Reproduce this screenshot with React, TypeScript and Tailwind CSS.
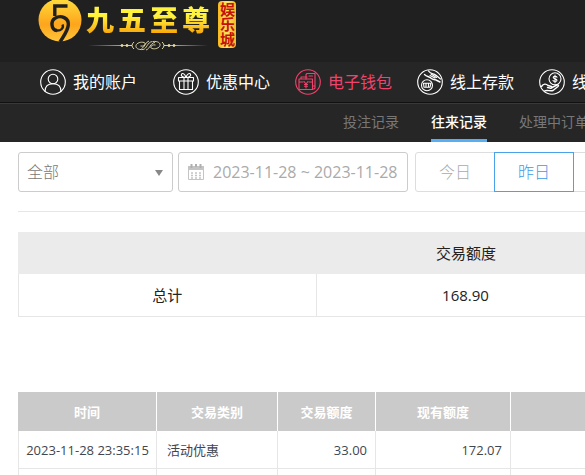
import type { ReactNode } from "react";

const NAV_ITEMS = [
  { label: "我的账户", icon: "user", active: false, spacing: "mr-9" },
  { label: "优惠中心", icon: "gift", active: false, spacing: "mr-[25px]" },
  { label: "电子钱包", icon: "wallet", active: true, spacing: "mr-[25px]" },
  { label: "线上存款", icon: "deposit", active: false, spacing: "mr-[25px]" },
  { label: "线上取款", icon: "withdraw", active: false, spacing: "mr-[25px]" },
] as const;

const TABS = ["投注记录", "往来记录", "处理中订单"];
const RANGES = ["今日", "昨日", "本周"];

type NavIcon = (typeof NAV_ITEMS)[number]["icon"];

export default function App() {
  return (
    <div className="h-screen overflow-hidden bg-white font-['Open_Sans','Noto_Sans_CJK_SC',sans-serif] whitespace-nowrap">
      <header className="bg-[#262626]">
        <Logo />
        <MainNav />
        <SubNav />
      </header>
      <main className="pl-[18px]">
        <Filters />
        <SummaryTable />
        <RecordsTable />
      </main>
    </div>
  );
}

function Logo() {
  return (
    <div className="h-[62px] bg-[#202020] pl-[38px]">
      <a href="#" className="inline-flex items-start">
        <Emblem />
        <span className="ml-1 flex flex-col items-center">
          <span className="flex gap-1 bg-linear-to-b from-[#fff23c] from-40% to-[#f7a400] to-85% bg-clip-text text-[28px] leading-[40px] font-black text-transparent">
            <span>九</span>
            <span>五</span>
            <span>至</span>
            <span>尊</span>
          </span>
          <Flourish />
        </span>
        <span className="mt-px ml-2 flex h-[47px] w-[18px] items-center justify-center rounded-sm bg-linear-to-r from-[#f7b81c] via-[#ffe65c] to-[#f7b81c] text-[15px] leading-[18px] font-bold text-[#c31208] [writing-mode:vertical-rl]">
          娱乐城
        </span>
      </a>
    </div>
  );
}

function Emblem() {
  return (
    <svg aria-hidden="true" viewBox="0 0 44 44" className="h-11 w-11 shrink-0">
      <defs>
        <linearGradient id="gold" x1="0" y1="0" x2="0" y2="1">
          <stop offset="0" stopColor="#ffdc3c" />
          <stop offset="0.6" stopColor="#fda51c" />
          <stop offset="1" stopColor="#ffc53a" />
        </linearGradient>
      </defs>
      <circle cx="22" cy="20" r="21.5" fill="url(#gold)" />
      <g fill="none" stroke="#202020">
        <path d="M29.500 6H16.800V16" strokeWidth="3.400" />
        <path
          d="M19 30.500C13 30 12.500 21 17 18.300C23 14.500 31 18 30.300 25C29.800 31 26 35.500 22 42"
          strokeWidth="3.400"
        />
        <path d="M18.500 30.500C23 31 26 28 24.500 24.500" strokeWidth="2.400" />
      </g>
    </svg>
  );
}

function Flourish() {
  return (
    <svg
      aria-hidden="true"
      viewBox="0 0 124 12"
      className="h-3 w-[124px] fill-none stroke-[#e8dca8]"
    >
      <defs>
        <linearGradient id="line-left" x1="0" x2="1">
          <stop offset="0" stopColor="#e8d48a" stopOpacity="0" />
          <stop offset="1" stopColor="#e8d48a" />
        </linearGradient>
        <linearGradient id="line-right" x1="0" x2="1">
          <stop offset="0" stopColor="#e8d48a" />
          <stop offset="1" stopColor="#e8d48a" stopOpacity="0" />
        </linearGradient>
      </defs>
      <rect x="2" y="5" width="44" height="1" fill="url(#line-left)" stroke="none" />
      <rect x="78" y="5" width="44" height="1" fill="url(#line-right)" stroke="none" />
      <path d="M48 2q-4 3.500 0 7M76 2q4 3.500 0 7" />
      <path
        d="M57 9.500C52 10 49.500 8 50 5.500S55 1.500 58 2.500 58 7 54.500 6M67 1.500C72 1 74.500 3 74 5.500S69 9.500 66 8.500 66 4 69.500 5M57 9.500C61 9 61 2 66.500 1.500M60 10C64 9 64 3 69 2.500M55.500 8.500C59 7.500 59 2 63 1"
        strokeWidth="0.900"
      />
      <circle cx="36" cy="5.500" r="1" fill="#e8d48a" />
      <circle cx="41" cy="5.500" r="1" fill="#e8d48a" />
      <circle cx="83" cy="5.500" r="1" fill="#e8d48a" />
      <circle cx="88" cy="5.500" r="1" fill="#e8d48a" />
    </svg>
  );
}

function MainNav() {
  return (
    <nav className="flex h-[41px] items-center border-b border-[#111111] pl-10">
      {NAV_ITEMS.map((item) => (
        <a
          key={item.label}
          href="#"
          className={`flex shrink-0 items-center gap-[7px] text-[16px] leading-6 ${item.spacing} ${
            item.active ? "text-[#f0436c]" : "text-white"
          }`}
        >
          <NavGlyph icon={item.icon} />
          {item.label}
        </a>
      ))}
    </nav>
  );
}

function NavGlyph({ icon }: { icon: NavIcon }) {
  const shapes: Record<NavIcon, ReactNode> = {
    user: (
      <>
        <circle cx="13" cy="10" r="4.800" />
        <path d="M5 22.500c0-4.800 3-7.700 8-7.700s8 2.900 8 7.700" />
      </>
    ),
    gift: (
      <>
        <path d="M5.500 8.500h15v3.500h-15zM6.500 12v8.500h13V12M11 8.500v12M15 8.500v12" />
        <path d="M13 8.500C10 8.500 7.500 7 8.500 5.200S12 5 13 8.500c1-3.500 3.500-5 4.500-3.300S16 8.500 13 8.500" />
      </>
    ),
    wallet: (
      <>
        <path d="M4 10h13.500v10.500H4zM4 13h4M14 13h3.500M6 10V8h6" />
        <path d="M11 10V5.500L12 4.500h8v14.500l-1 1h-1.500M14 7h3.500M17.500 17H20" />
        <path d="m9 12.500 2 2.500 2-2.500M11 15v4M9.500 15.500h3M9.500 17.200h3" />
      </>
    ),
    deposit: (
      <>
        <circle cx="10" cy="16.200" r="5.500" />
        <path d="M6.500 14.200h7.500l-1 4H7zM9 14.500v3.500M11.500 14.500v3.500" />
        <path
          d="M11.500 2c1.500 2.500 3.500 2.500 6 3.500s3.500 3 6 4.500"
          strokeWidth="1.400"
        />
        <path d="M7.500 5.500c2.500 2.500 5 2 7 4 1.500 1.500 3 .5 4.500 1.500l4 2" strokeWidth="1.400" />
        <path d="m13 6.500 5 2.500M14 5l5.500 3.500" />
      </>
    ),
    withdraw: (
      <>
        <circle cx="16" cy="9.800" r="6" />
        <path d="M18 8.200c-.7-1.400-3.800-1.200-3.800.4s3.800 1 3.800 2.700-3.200 1.600-4 .2M16 6v7.800" />
        <path
          d="M2.500 17.500C4.500 14.500 7 14.500 9 16.500l3.500 1c1 .8.300 1.700-.7 1.700L8.500 18.500"
          strokeWidth="1.400"
        />
        <path d="m13 18.500 5-2.500c1.500-.5 2 .5 1 1.500L14 21.500c-3 1-6-1-8.500.5" strokeWidth="1.400" />
      </>
    ),
  };

  return (
    <svg
      aria-hidden="true"
      viewBox="0 0 26 26"
      className="size-[26px] shrink-0 fill-none stroke-current"
      strokeWidth="1.100"
      strokeLinecap="round"
      strokeLinejoin="round"
    >
      <circle cx="13" cy="13" r="12.300" />
      {shapes[icon]}
    </svg>
  );
}

function SubNav() {
  return (
    <nav className="flex h-[39px] gap-8 border-t border-[#393939] pl-[343px] text-[14px] leading-[35px]">
      {TABS.map((tab) => (
        <a
          key={tab}
          href="#"
          className={
            tab === "往来记录"
              ? "shrink-0 border-b-3 border-[#56aef5] font-medium text-white"
              : "shrink-0 border-b-3 border-transparent text-[#777777]"
          }
        >
          {tab}
        </a>
      ))}
    </nav>
  );
}

function Filters() {
  return (
    <form className="flex border-b border-[#e6e6e6] pt-2.5 pb-[19px] text-[16px]">
      <div className="relative mr-[5px] shrink-0">
        <select
          aria-label="交易类别"
          className="h-10 w-[155px] appearance-none rounded-[3px] border border-[#cccccc] bg-white px-2 font-light text-[#777777]"
        >
          <option>全部</option>
        </select>
        <svg
          aria-hidden="true"
          viewBox="0 0 8 6"
          className="pointer-events-none absolute top-[18px] right-2.5 h-1.5 w-2 fill-[#888888]"
        >
          <path d="M0 0h8L4 6z" />
        </svg>
      </div>
      <label className="mr-[7px] flex h-10 w-[230px] shrink-0 items-center gap-2 rounded-[3px] border border-[#cccccc] pl-2">
        <CalendarGlyph />
        <input
          aria-label="日期范围"
          defaultValue="2023-11-28 ~ 2023-11-28"
          className="w-[194px] text-[#aaaaaa] outline-none"
        />
      </label>
      <div className="flex shrink-0">
        {RANGES.map((range) => (
          <button
            key={range}
            type="button"
            className={
              range === "昨日"
                ? "relative -ml-px h-10 w-20 border border-[#4aa3e8] font-light text-[#3d9be6]"
                : "-ml-px h-10 w-20 border border-[#dddddd] font-light text-[#aaaaaa] first:ml-0 first:rounded-l-[3px]"
            }
          >
            {range}
          </button>
        ))}
      </div>
    </form>
  );
}

function CalendarGlyph() {
  return (
    <svg aria-hidden="true" viewBox="0 0 18 18" className="size-[18px] shrink-0">
      <path d="M1.500 3.500h15v13h-15z" fill="none" stroke="#c4c4c4" />
      <path d="M1 3h16v4H1z" fill="#c4c4c4" />
      <path d="M4.500 1v4M9 1v3M13.500 1v4" stroke="#b0b0b0" strokeWidth="2" />
      <path
        d="M4 10h10M4 12.500h10M4 15h10"
        stroke="#c4c4c4"
        strokeWidth="1.500"
        strokeDasharray="2 2"
      />
    </svg>
  );
}

function SummaryTable() {
  return (
    <table className="mt-5 w-full min-w-[896px] table-fixed border-separate border-spacing-0 text-center text-[15px] leading-5 text-[#222222]">
      <thead>
        <tr className="h-[42px] bg-[#ebebeb]">
          <td />
          <th className="font-normal">交易额度</th>
          <td />
        </tr>
      </thead>
      <tbody>
        <tr className="h-[43px]">
          <td className="border-x border-b border-[#e6e6e6]">总计</td>
          <td className="border-r border-b border-[#e6e6e6]">168.90</td>
          <td className="border-r border-b border-[#e6e6e6]" />
        </tr>
      </tbody>
    </table>
  );
}

function RecordsTable() {
  return (
    <table className="mt-[75px] w-full min-w-[800px] table-fixed border-separate border-spacing-0 text-[13px] leading-5 text-[#3f4650]">
      <colgroup>
        <col className="w-[139px]" />
        <col className="w-[121px]" />
        <col className="w-[98px]" />
        <col className="w-[135px]" />
        <col />
      </colgroup>
      <thead>
        <tr className="h-[39px] bg-[#cacaca] text-white">
          <th className="border-r border-white font-bold">时间</th>
          <th className="border-r border-white font-bold">交易类别</th>
          <th className="border-r border-white font-bold">交易额度</th>
          <th className="border-r border-white font-bold">现有额度</th>
          <td />
        </tr>
      </thead>
      <tbody>
        <tr className="h-[38px]">
          <td className="border-x border-b border-[#e6e6e6] text-center">
            2023-11-28 23:35:15
          </td>
          <td className="border-r border-b border-[#e6e6e6] pl-2.5">活动优惠</td>
          <td className="border-r border-b border-[#e6e6e6] pr-2 text-right">33.00</td>
          <td className="border-r border-b border-[#e6e6e6] pr-2 text-right">172.07</td>
          <td className="border-b border-[#e6e6e6]" />
        </tr>
        <tr className="h-[38px]">
          <td className="border-x border-[#e6e6e6]" />
          <td className="border-r border-[#e6e6e6]" />
          <td className="border-r border-[#e6e6e6]" />
          <td className="border-r border-[#e6e6e6]" />
          <td />
        </tr>
      </tbody>
    </table>
  );
}
